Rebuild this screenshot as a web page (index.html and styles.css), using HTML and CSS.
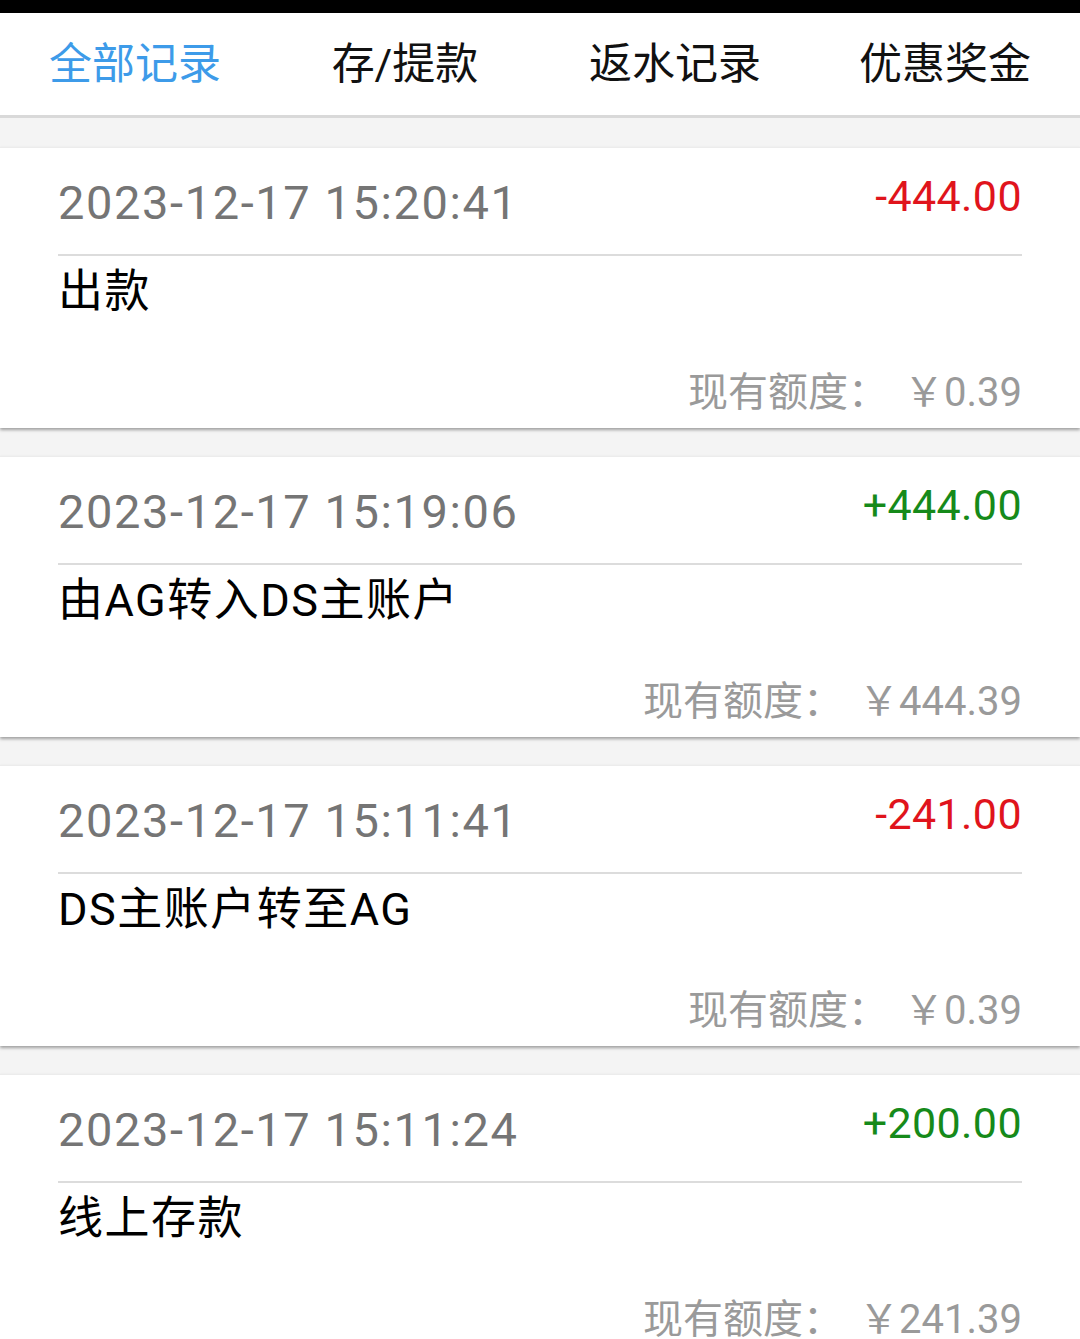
FILE: index.html
```html
<!DOCTYPE html>
<html>
<head>
  <title>记录</title>
  <meta charset="utf-8">
  <link rel="stylesheet" href="styles.css">
</head>
<body>
  <div class="status-bar"></div>

  <nav class="tabs">
    <a class="tab active" href="#">全部记录</a>
    <a class="tab" href="#">存/提款</a>
    <a class="tab" href="#">返水记录</a>
    <a class="tab" href="#">优惠奖金</a>
  </nav>

  <div class="records">
    <div class="record">
      <div class="record-head">
        <span class="record-time">2023-12-17 15:20:41</span>
        <span class="record-amount minus">-444.00</span>
      </div>
      <div class="record-title">出款</div>
      <div class="record-balance">现有额度：<span class="balance-value">￥0.39</span></div>
    </div>

    <div class="record">
      <div class="record-head">
        <span class="record-time">2023-12-17 15:19:06</span>
        <span class="record-amount plus">+444.00</span>
      </div>
      <div class="record-title">由AG转入DS主账户</div>
      <div class="record-balance">现有额度：<span class="balance-value">￥444.39</span></div>
    </div>

    <div class="record">
      <div class="record-head">
        <span class="record-time">2023-12-17 15:11:41</span>
        <span class="record-amount minus">-241.00</span>
      </div>
      <div class="record-title">DS主账户转至AG</div>
      <div class="record-balance">现有额度：<span class="balance-value">￥0.39</span></div>
    </div>

    <div class="record">
      <div class="record-head">
        <span class="record-time">2023-12-17 15:11:24</span>
        <span class="record-amount plus">+200.00</span>
      </div>
      <div class="record-title">线上存款</div>
      <div class="record-balance">现有额度：<span class="balance-value">￥241.39</span></div>
    </div>
  </div>
</body>
</html>
```

FILE: styles.css
```css
body {
  margin: 0;
  background: #f4f4f4;
  font-family: Roboto, 'Noto Sans CJK SC', sans-serif;
  color: #000;
  overflow: hidden;
}

a {
  color: inherit;
  text-decoration: none;
}

.status-bar {
  height: 13px;
  background: #000;
}

.tabs {
  display: grid;
  grid-template-columns: repeat(4, 1fr);
  height: 102px;
  background: #fff;
  border-bottom: 3px solid #d9d9d9;
}

.tab {
  display: flex;
  align-items: center;
  justify-content: center;
  padding-bottom: 8px;
  font-size: 43px;
  color: #111;
}

.tab.active {
  color: #3d9be9;
}

.records {
  display: flex;
  flex-direction: column;
  gap: 28px;
  padding-top: 29px;
}

.record {
  background: #fff;
  padding: 0 58px 13px;
  border-top: 1px solid #ececec;
  box-shadow: 0 2px 3px rgba(0, 0, 0, 0.35);
}

.record-head {
  display: flex;
  justify-content: space-between;
  align-items: center;
  height: 106px;
  border-bottom: 2px solid #dcdcdc;
}

.record-time {
  font-size: 47px;
  color: #757575;
  letter-spacing: 1.6px;
  margin-top: 2px;
}

.record-amount {
  font-size: 43px;
  letter-spacing: 0.4px;
  margin-bottom: 10px;
}

.record-amount.minus {
  color: #e0141c;
}

.record-amount.plus {
  color: #168a1a;
}

.record-title {
  font-size: 45px;
  line-height: 72px;
  letter-spacing: 1.5px;
  color: #000;
}

.record-balance {
  margin-top: 43px;
  line-height: 44px;
  font-size: 40px;
  color: #9a9a9a;
  text-align: right;
}

.balance-value {
  margin-left: 16px;
}
```
